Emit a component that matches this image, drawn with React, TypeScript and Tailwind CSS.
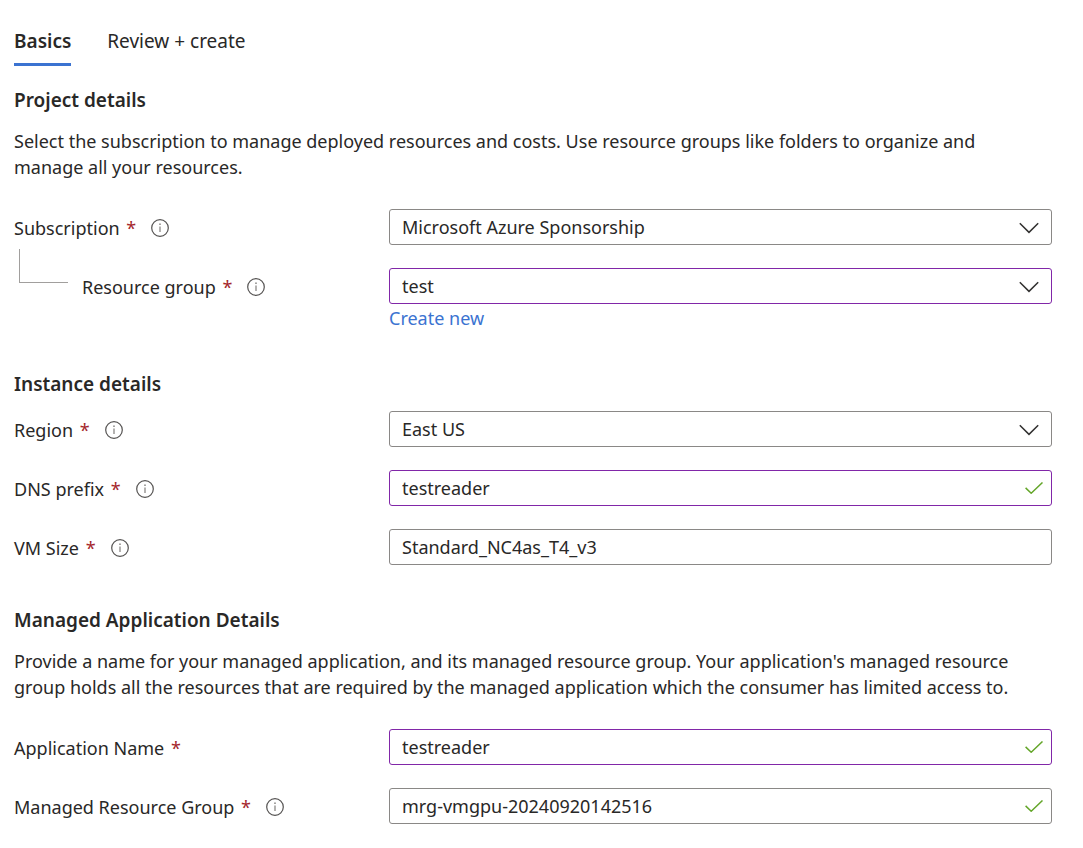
import { useState, type ReactNode } from "react";

function InfoIcon() {
  return (
    <svg viewBox="0 0 18 18" className="h-[18px] w-[18px]" fill="none" aria-hidden="true">
      <circle cx="9" cy="9" r="8.3" stroke="#555352" strokeWidth="1.2" />
      <path d="M9 7.4V13" stroke="#8a8886" strokeWidth="1.3" />
      <circle cx="9" cy="5.2" r="0.85" fill="#8a8886" />
    </svg>
  );
}

function ChevronIcon() {
  return (
    <svg viewBox="0 0 20 12" className="pointer-events-none absolute right-[13px] top-[13px] h-3 w-5" fill="none" aria-hidden="true">
      <path d="M0.8 1.2 L10 10.4 L19.2 1.2" stroke="#323130" strokeWidth="1.5" />
    </svg>
  );
}

function CheckIcon() {
  return (
    <svg viewBox="0 0 18 12" className="pointer-events-none absolute right-[9px] top-[12px] h-3 w-[18px]" fill="none" aria-hidden="true">
      <path d="M0.6 5.9 L6.2 11.2 L17.5 0.5" stroke="#64a62a" strokeWidth="1.5" />
    </svg>
  );
}

type RowProps = {
  id: string;
  label: string;
  info?: boolean;
  nested?: boolean;
  children: ReactNode;
};

function Row({ id, label, info = true, nested = false, children }: RowProps) {
  return (
    <div className="flex items-start">
      <div className="flex h-9 w-[375px] shrink-0 items-center pt-0.5">
        {nested && (
          <span className="-mt-[21px] ml-[5px] mr-3.5 h-[34px] w-[49px] self-start border-b border-l border-[#a19f9d]" />
        )}
        <label htmlFor={id}>
          {label} <span className="ml-0.5 text-[#a4262c]">*</span>
        </label>
        {info && (
          <button type="button" aria-label={`About ${label}`} className="ml-[15px]">
            <InfoIcon />
          </button>
        )}
      </div>
      <div className="min-w-0 flex-1">{children}</div>
    </div>
  );
}

const plain = "border-[#8a8886]";
const edited = "border-[#8127a8]";
const box = "block h-9 w-full appearance-none rounded-[3px] border bg-white pl-3 pr-10 text-[#292827]";

function SelectField({ id, value, changed = false }: { id: string; value: string; changed?: boolean }) {
  return (
    <div className="relative">
      <select id={id} defaultValue={value} className={`${box} ${changed ? edited : plain}`}>
        <option>{value}</option>
      </select>
      <ChevronIcon />
    </div>
  );
}

type TextProps = { id: string; value: string; changed?: boolean; valid?: boolean };

function TextField({ id, value, changed = false, valid = false }: TextProps) {
  return (
    <div className="relative">
      <input id={id} type="text" defaultValue={value} className={`${box} ${changed ? edited : plain}`} />
      {valid && <CheckIcon />}
    </div>
  );
}

function Tab({ label, active, onClick }: { label: string; active: boolean; onClick: () => void }) {
  return (
    <button
      type="button"
      role="tab"
      aria-selected={active}
      onClick={onClick}
      className={`border-b-[3px] pb-[9px] text-[19px] ${active ? "border-[#3b73d1] font-semibold" : "border-transparent"}`}
    >
      {label}
    </button>
  );
}

export default function App() {
  const [tab, setTab] = useState("Basics");
  return (
    <main className="min-h-screen bg-white pb-6 pl-3.5 pr-[31px] pt-7 font-['Noto_Sans','Open_Sans',sans-serif] text-[18px] leading-[26px] text-[#292827]">
      <div role="tablist" className="flex gap-9">
        {["Basics", "Review + create"].map((name) => (
          <Tab key={name} label={name} active={tab === name} onClick={() => setTab(name)} />
        ))}
      </div>

      <section className="mt-[21px]">
        <h2 className="text-[19px] font-semibold">Project details</h2>
        <p className="mt-[15px] pr-4">
          Select the subscription to manage deployed resources and costs. Use resource groups like folders to organize and
          manage all your resources.
        </p>
        <div className="mt-[29px] flex flex-col gap-[23px]">
          <Row id="subscription" label="Subscription">
            <SelectField id="subscription" value="Microsoft Azure Sponsorship" />
          </Row>
          <Row id="resource-group" label="Resource group" nested>
            <SelectField id="resource-group" value="test" changed />
            <a href="#create" className="mt-px inline-block align-top text-[#3b73d1]">
              Create new
            </a>
          </Row>
        </div>
      </section>

      <section className="mt-10">
        <h2 className="text-[19px] font-semibold">Instance details</h2>
        <div className="mt-3.5 flex flex-col gap-[23px]">
          <Row id="region" label="Region">
            <SelectField id="region" value="East US" />
          </Row>
          <Row id="dns-prefix" label="DNS prefix">
            <TextField id="dns-prefix" value="testreader" changed valid />
          </Row>
          <Row id="vm-size" label="VM Size">
            <TextField id="vm-size" value="Standard_NC4as_T4_v3" />
          </Row>
        </div>
      </section>

      <section className="mt-[42px]">
        <h2 className="text-[19px] font-semibold">Managed Application Details</h2>
        <p className="mt-[15px] pr-4">
          Provide a name for your managed application, and its managed resource group. Your application's managed resource
          group holds all the resources that are required by the managed application which the consumer has limited access to.
        </p>
        <div className="mt-[29px] flex flex-col gap-[23px]">
          <Row id="application-name" label="Application Name" info={false}>
            <TextField id="application-name" value="testreader" changed valid />
          </Row>
          <Row id="managed-resource-group" label="Managed Resource Group">
            <TextField id="managed-resource-group" value="mrg-vmgpu-20240920142516" valid />
          </Row>
        </div>
      </section>
    </main>
  );
}
